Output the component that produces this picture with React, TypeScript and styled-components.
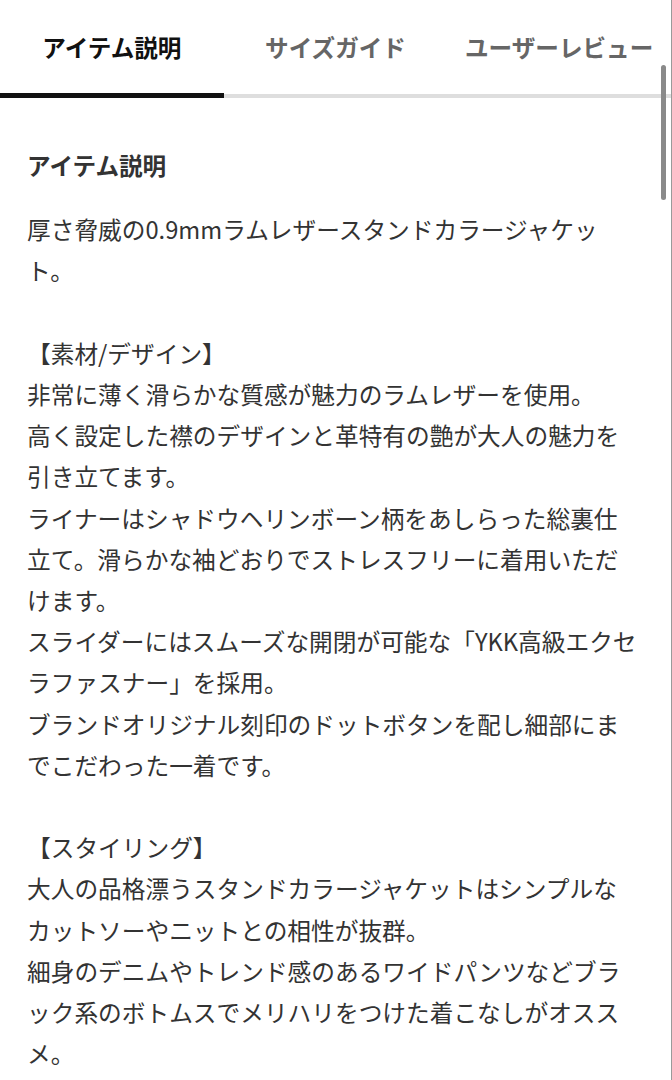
import React, { useState } from 'react';
import styled, { createGlobalStyle } from 'styled-components';

const GlobalStyle = createGlobalStyle`
  html, body {
    margin: 0;
    padding: 0;
    background: #ffffff;
  }
  body {
    font-family: "Noto Sans CJK JP", "Noto Sans", sans-serif;
    -webkit-font-smoothing: antialiased;
  }
`;

const Page = styled('div')`
  position: relative;
  width: 672px;
  height: 1080px;
  overflow: hidden;
  box-sizing: border-box;
  border-right: 1px solid #9a9a9a;
  background: #ffffff;
`;

const TabBar = styled('div')`
  display: grid;
  grid-template-columns: repeat(3, 1fr);
  align-items: end;
`;

const Tab = styled('button')<{ active?: boolean }>`
  display: flex;
  align-items: center;
  justify-content: center;
  height: 98px;
  padding: 0;
  margin: 0;
  border: none;
  border-bottom: ${(props) => (props.active ? '5px solid #111111' : '4px solid #dedede')};
  background: transparent;
  font-family: "Noto Sans CJK JP", sans-serif;
  font-size: 23.6px;
  font-weight: 700;
  white-space: nowrap;
  color: ${(props) => (props.active ? '#111111' : '#666666')};
  cursor: pointer;
  outline: none;
`;

const Content = styled('div')`
  padding: 47px 32px 0 27px;
  color: #333333;
  font-size: 23.7px;
  line-height: 41.2px;
`;

const Heading = styled('h2')`
  margin: 0 0 23px;
  font-size: 23.6px;
  line-height: 41.2px;
  font-weight: 700;
  color: #333333;
`;

const Section = styled('p')`
  margin: 0 0 41.2px;
  font-size: 23.7px;
  line-height: 41.2px;
  line-break: strict;
`;

const ScrollThumb = styled('div')`
  position: absolute;
  top: 65px;
  right: 5px;
  width: 5px;
  height: 135px;
  border-radius: 3px;
  background: #8a8a8a;
`;

const tabs = ['アイテム説明', 'サイズガイド', 'ユーザーレビュー'];

const sections: string[][] = [
  ['厚さ脅威の0.9mmラムレザースタンドカラージャケット。'],
  [
    '【素材/デザイン】',
    '非常に薄く滑らかな質感が魅力のラムレザーを使用。',
    '高く設定した襟のデザインと革特有の艶が大人の魅力を引き立てます。',
    'ライナーはシャドウヘリンボーン柄をあしらった総裏仕立て。滑らかな袖どおりでストレスフリーに着用いただけます。',
    'スライダーにはスムーズな開閉が可能な「YKK高級エクセラファスナー」を採用。',
    'ブランドオリジナル刻印のドットボタンを配し細部にまでこだわった一着です。',
  ],
  [
    '【スタイリング】',
    '大人の品格漂うスタンドカラージャケットはシンプルなカットソーやニットとの相性が抜群。',
    '細身のデニムやトレンド感のあるワイドパンツなどブラック系のボトムスでメリハリをつけた着こなしがオススメ。',
  ],
];

export default function App() {
  const [active, setActive] = useState(0);

  return (
    <>
      <GlobalStyle />
      <Page>
        <TabBar>
          {tabs.map((t, i) => (
            <Tab key={t} active={i === active} onClick={() => setActive(i)}>
              {t}
            </Tab>
          ))}
        </TabBar>
        <Content>
          <Heading>アイテム説明</Heading>
          {sections.map((lines, i) => (
            <Section key={i}>
              {lines.map((line, j) => (
                <React.Fragment key={j}>
                  {j > 0 && <br />}
                  {line}
                </React.Fragment>
              ))}
            </Section>
          ))}
        </Content>
        <ScrollThumb />
      </Page>
    </>
  );
}
